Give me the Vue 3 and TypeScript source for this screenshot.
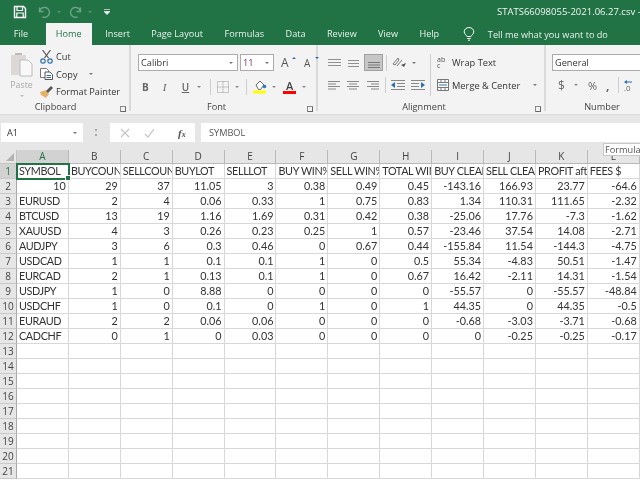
<script setup lang="ts">
const tabs: string[] = ['File', 'Home', 'Insert', 'Page Layout', 'Formulas', 'Data', 'Review', 'View', 'Help']
const cols: string[] = 'ABCDEFGHIJKL'.split('')
const head: string[] = ['SYMBOL', 'BUYCOUNT', 'SELLCOUNT', 'BUYLOT', 'SELLLOT', 'BUY WIN%', 'SELL WIN%', 'TOTAL WIN%', 'BUY CLEAN', 'SELL CLEAN', 'PROFIT after', 'FEES $']
const data: string[][] = [
  ['10', '29', '37', '11.05', '3', '0.38', '0.49', '0.45', '-143.16', '166.93', '23.77', '-64.6'],
  ['EURUSD', '2', '4', '0.06', '0.33', '1', '0.75', '0.83', '1.34', '110.31', '111.65', '-2.32'],
  ['BTCUSD', '13', '19', '1.16', '1.69', '0.31', '0.42', '0.38', '-25.06', '17.76', '-7.3', '-1.62'],
  ['XAUUSD', '4', '3', '0.26', '0.23', '0.25', '1', '0.57', '-23.46', '37.54', '14.08', '-2.71'],
  ['AUDJPY', '3', '6', '0.3', '0.46', '0', '0.67', '0.44', '-155.84', '11.54', '-144.3', '-4.75'],
  ['USDCAD', '1', '1', '0.1', '0.1', '1', '0', '0.5', '55.34', '-4.83', '50.51', '-1.47'],
  ['EURCAD', '2', '1', '0.13', '0.1', '1', '0', '0.67', '16.42', '-2.11', '14.31', '-1.54'],
  ['USDJPY', '1', '0', '8.88', '0', '0', '0', '0', '-55.57', '0', '-55.57', '-48.84'],
  ['USDCHF', '1', '0', '0.1', '0', '1', '0', '1', '44.35', '0', '44.35', '-0.5'],
  ['EURAUD', '2', '2', '0.06', '0.06', '0', '0', '0', '-0.68', '-3.03', '-3.71', '-0.68'],
  ['CADCHF', '0', '1', '0', '0.03', '0', '0', '0', '0', '-0.25', '-0.25', '-0.17']
]
const rows: number[] = Array.from({ length: 21 }, (_, i) => i + 1)
function isText(v: string): boolean {
  return /^[A-Z]/.test(v)
}
function cell(r: number, c: number): string {
  if (r === 1) return head[c]
  const row = data[r - 2]
  return row ? row[c] : ''
}
</script>

<template>
  <div class="app">
    <header class="green">
      <div class="title">
        <svg class="save" width="14" height="14" viewBox="0 0 14 14">
          <path d="M1.500 1.500h9l2 2v9h-11z" fill="none" stroke="#fff" stroke-width="1.400" />
          <path d="M4 2v3.500h5.500V2M3.800 12.500V8h6.400v4.500" fill="none" stroke="#fff" stroke-width="1.200" />
        </svg>
        <svg class="undo" width="13" height="12" viewBox="0 0 13 12">
          <path d="M1.500 5.500a5 5 0 1 1 3 5.500M1.500 1.500v4h4" fill="none" stroke="#6fa287" stroke-width="1.400" />
        </svg>
        <i class="tiny dim"></i>
        <svg class="redo" width="13" height="12" viewBox="0 0 13 12">
          <path d="M11.500 5.500a5 5 0 1 0-3 5.500M11.500 1.500v4h-4" fill="none" stroke="#6fa287" stroke-width="1.400" />
        </svg>
        <i class="tiny dim"></i>
        <svg class="custom" width="6" height="6" viewBox="0 0 6 6">
          <path d="M0 .5h6M0 2.500h6L3 5.500z" fill="#fff" stroke="#fff" stroke-width=".6" />
        </svg>
        <span class="filename">STATS66098055-2021.06.27.csv - Excel</span>
      </div>
      <nav class="tabs">
        <span v-for="t in tabs" :key="t" class="tab" :class="{ active: t === 'Home' }">{{ t }}</span>
        <svg class="bulb" width="12" height="14" viewBox="0 0 12 14">
          <path d="M4 9.500C3.500 8 1.200 7 1.200 4.800a4.800 4.300 0 0 1 9.600 0C10.800 7 8.500 8 8 9.500zM4.300 11.500h3.400M5 13.200h2" fill="none" stroke="#fff" stroke-width="1" />
        </svg>
        <span class="tell">Tell me what you want to do</span>
      </nav>
    </header>

    <section class="ribbon">
      <div class="group g-clip">
        <div class="clip-body">
          <div class="paste">
            <svg width="24" height="25" viewBox="0 0 24 25">
              <path d="M1 3h15v20H1z" fill="#dcd8d8" />
              <path d="M5 3h7V1H5z" fill="#bdb8b8" />
              <path d="M10 8h8l4 4v12H10z" fill="#f8f8f8" stroke="#bcbcbc" />
            </svg>
            <span>Paste</span>
            <i class="tiny pale"></i>
          </div>
          <div class="clip-items">
            <div class="clip-item">
              <svg width="13" height="14" viewBox="0 0 13 14">
                <path d="M2.500 0l6 8M10.500 0l-6 8" stroke="#555" stroke-width="1.200" />
                <circle cx="3" cy="11" r="2.200" fill="none" stroke="#2b6fb0" stroke-width="1.200" />
                <circle cx="10" cy="11" r="2.200" fill="none" stroke="#2b6fb0" stroke-width="1.200" />
              </svg>
              <span>Cut</span>
            </div>
            <div class="clip-item">
              <svg width="13" height="12" viewBox="0 0 13 12">
                <path d="M.5.500h6l2 2v7h-8z" fill="#fff" stroke="#777" />
                <path d="M5 4h5l2.500 2.500v5H5z" fill="#fff" stroke="#555" />
                <path d="M6.500 7.500h4.500M6.500 9.500h4.500" stroke="#2b6fb0" />
              </svg>
              <span>Copy</span>
              <i class="tiny copy-arrow"></i>
            </div>
            <div class="clip-item">
              <svg width="13" height="12" viewBox="0 0 13 12">
                <path d="M0 6l6-2 3 4-3 4-5-3z" fill="#e6b268" />
                <path d="M6 5l5-5 2 2-5 5z" fill="#555" />
              </svg>
              <span>Format Painter</span>
            </div>
          </div>
        </div>
        <div class="glabel"><span>Clipboard</span></div>
        <i class="launcher"></i>
      </div>

      <div class="group g-font">
        <div class="font-row1">
          <div class="combo font-name"><span>Calibri</span><i class="tiny"></i></div>
          <div class="combo font-size"><span>11</span><i class="tiny"></i></div>
          <span class="grow">A<small class="up"></small></span>
          <span class="grow shrink">A<small class="down"></small></span>
        </div>
        <div class="font-row2">
          <b class="f-b">B</b>
          <em class="f-i">I</em>
          <u class="f-u">U</u>
          <i class="tiny t1"></i>
          <i class="vsep v1"></i>
          <svg width="12" height="12" viewBox="0 0 12 12">
            <path d="M.5.500h11v11H.5zM6 .5v11M.5 6h11" fill="none" stroke="#999" stroke-dasharray="1 1" />
          </svg>
          <i class="tiny t2"></i>
          <i class="vsep v2"></i>
          <svg width="14" height="14" viewBox="0 0 14 14">
            <path d="M3 5l4-4 4 4-3.500 4.500h-2z" fill="#fff" stroke="#666" />
            <circle cx="11.500" cy="6.500" r="1.800" fill="#2b79c2" />
            <rect x="0" y="10.500" width="13" height="3" fill="#ffff00" />
          </svg>
          <i class="tiny t3"></i>
          <span class="colour-a">A<i></i></span>
          <i class="tiny t4"></i>
        </div>
        <div class="glabel"><span>Font</span></div>
        <i class="launcher"></i>
      </div>

      <div class="group g-align">
        <div class="align-left">
          <div class="a-row">
            <svg width="13" height="8" viewBox="0 0 13 8"><path d="M0 .5h13M0 3.500h13M0 6.500h13" stroke="#909090" /></svg>
            <svg class="mid" width="13" height="8" viewBox="0 0 13 8"><path d="M1 .5h11M1 3.500h11M1 6.500h11" stroke="#909090" /></svg>
            <span class="sel-align">
              <svg width="12" height="6" viewBox="0 0 12 6"><path d="M0 .5h12M0 3h12M0 5.500h12" stroke="#777" /></svg>
            </span>
            <i class="vsep short"></i>
            <svg width="14" height="12" viewBox="0 0 14 12">
              <path d="M1 7l5-6 1 2-4 5zM5 9l5-6" fill="none" stroke="#777" />
              <path d="M9 8l5-2-2 4z" fill="#555" />
            </svg>
            <i class="tiny ori"></i>
          </div>
          <div class="a-row r2">
            <svg width="12" height="9" viewBox="0 0 12 9"><path d="M0 .5h12M0 3h8M0 5.500h12M0 8h8" stroke="#888" /></svg>
            <svg class="mid2" width="12" height="9" viewBox="0 0 12 9"><path d="M0 .5h12M2 3h8M0 5.500h12M2 8h8" stroke="#888" /></svg>
            <svg class="mid3" width="12" height="9" viewBox="0 0 12 9"><path d="M0 .5h12M4 3h8M0 5.500h12M4 8h8" stroke="#888" /></svg>
            <i class="vsep short s2"></i>
            <svg width="14" height="10" viewBox="0 0 14 10"><path d="M0 .5h14M6 3.500h8M6 6.500h8M0 9.500h14" stroke="#888" /><path d="M0 5l4-3v6z" fill="#2b6fb0" /></svg>
            <svg class="ind2" width="14" height="10" viewBox="0 0 14 10"><path d="M0 .5h14M0 3.500h8M0 6.500h8M0 9.500h14" stroke="#888" /><path d="M14 5l-4-3v6z" fill="#2b6fb0" /></svg>
          </div>
        </div>
        <i class="vsep tall"></i>
        <div class="align-right">
          <div class="a-cmd">
            <span class="wrap-icon"><span>ab</span><span>c</span></span>
            <span>Wrap Text</span>
          </div>
          <div class="a-cmd cmd2">
            <svg width="12" height="12" viewBox="0 0 12 12">
              <path d="M.5.500h11v11H.5zM.5 3.500h11M.5 8.500h11M4 .5v3M8 .5v3M4 8.500v3M8 8.500v3" fill="#fff" stroke="#777" />
              <path d="M2 6h8" stroke="#2b6fb0" />
            </svg>
            <span>Merge &amp; Center</span>
            <i class="tiny merge-arrow"></i>
          </div>
        </div>
        <div class="glabel"><span>Alignment</span></div>
        <i class="launcher"></i>
      </div>

      <div class="group g-num">
        <div class="combo num-fmt"><span>General</span></div>
        <div class="num-row">
          <span class="n-d">$</span>
          <i class="tiny"></i>
          <span class="n-p">%</span>
          <span class="n-c">,</span>
          <i class="vsep short n-s"></i>
          <svg width="12" height="12" viewBox="0 0 12 12">
            <path d="M0 3l3-2v4z" fill="#2b6fb0" />
            <path d="M3 3h5" stroke="#2b6fb0" />
            <text x="0" y="12" font-size="8" fill="#666">.0</text>
          </svg>
        </div>
        <div class="glabel"><span>Number</span></div>
      </div>
    </section>

    <div class="formula-bar">
      <div class="namebox"><span>A1</span><i class="tiny"></i></div>
      <span class="dots"></span>
      <div class="fx-box">
        <svg width="10" height="10" viewBox="0 0 10 10"><path d="M1 1l8 8M9 1l-8 8" stroke="#c4c4c4" stroke-width="1.200" /></svg>
        <svg width="11" height="10" viewBox="0 0 11 10"><path d="M1 6l3 3 6-8" fill="none" stroke="#c4c4c4" stroke-width="1.200" /></svg>
        <span class="fx">f<small>x</small></span>
      </div>
      <div class="formula"><span>SYMBOL</span></div>
    </div>

    <main class="sheet">
      <div class="corner"><i></i></div>
      <div v-for="c in cols" :key="c" class="ch" :class="{ on: c === 'A' }">{{ c }}</div>
      <template v-for="r in rows" :key="r">
        <div class="rh" :class="{ on: r === 1 }">{{ r }}</div>
        <div
          v-for="(c, ci) in cols"
          :key="c"
          class="cell"
          :class="{ left: r === 1 || isText(cell(r, ci)), active: r === 1 && ci === 0 }"
        >
          <span>{{ cell(r, ci) }}</span>
          <i v-if="r === 1 && ci === 0" class="handle"></i>
        </div>
      </template>
      <div class="tip">Formula</div>
    </main>
  </div>
</template>

<style>
html, body { margin: 0; overflow: hidden; }
</style>

<style scoped>
.app { width: 640px; height: 480px; overflow: hidden; position: relative; display: flex; flex-direction: column; background: #fff; font-family: "Open Sans", "Noto Sans", sans-serif; color: #333; font-size: 9.2px; filter: blur(0.35px); }
i { display: block; font-style: normal; }
.green { background: #217346; color: #fff; height: 45px; flex: none; }
.title { height: 23px; display: flex; align-items: center; overflow: hidden; }
.save { margin-left: 13px; flex: none; }
.undo { margin-left: 11px; flex: none; }
.tiny { width: 0; height: 0; flex: none; border-left: 2.5px solid transparent; border-right: 2.5px solid transparent; border-top: 2.5px solid #777; }
.tiny.dim { border-top-color: #5c9579; margin-left: 6px; }
.redo { margin-left: 8px; flex: none; }
.custom { margin-left: 12px; flex: none; }
.filename { margin-left: 387px; flex: none; font-size: 9.5px; color: #f0f5f2; white-space: nowrap; }
.tabs { height: 22px; display: flex; align-items: center; }
.tab { padding: 0 10.7px; line-height: 22px; white-space: nowrap; font-size: 9.15px; color: #e9f2ed; }
.tab:first-child { margin-left: 3px; }
.tab.active { background: #f3f3f3; color: #217346; margin: 0 3px 0 7px; padding: 0 10px; }
.bulb { margin-left: 13px; flex: none; }
.tell { margin-left: 13px; white-space: nowrap; font-size: 9.15px; color: #e9f2ed; }

.ribbon { height: 70px; flex: none; background: #f3f3f3; display: flex; border-bottom: 1px solid #dcdcdc; box-sizing: border-box; }
.group { position: relative; box-sizing: border-box; border-right: 2px solid #dadada; margin-bottom: 3px; flex: none; }
.g-clip { width: 131px; }
.g-font { width: 187px; padding: 9px 0 0 7px; }
.g-align { width: 228px; padding: 9px 0 0 10px; display: flex; }
.g-num { flex: 1; padding: 9px 0 0 6px; border-right: 0; overflow: visible; min-width: 0; }
.glabel { position: absolute; left: 0; right: 0; bottom: -2px; text-align: center; line-height: 12px; font-size: 9.2px; color: #444; }
.g-clip .glabel { right: 18px; }
.g-font .glabel { right: 14px; }
.g-align .glabel { right: 14px; }
.g-num .glabel { left: 18px; right: 0; }
.launcher { position: absolute; right: 3px; bottom: -1px; width: 6px; height: 6px; border: 1px solid #888; box-sizing: border-box; border-width: 1px 0 0 1px; }
.launcher::after { content: ""; display: block; width: 4px; height: 4px; border-right: 1px solid #666; border-bottom: 1px solid #666; }

.clip-body { display: flex; padding: 7px 0 0 9px; }
.paste { width: 25px; display: flex; flex-direction: column; align-items: center; color: #a8a8a8; line-height: 12px; font-size: 8.8px; }
.paste svg { margin-bottom: 2px; }
.tiny.pale { border-top-color: #bbb; margin-top: 4px; }
.clip-items { margin: -4px 0 0 6px; display: flex; flex-direction: column; }
.clip-item { height: 17.5px; display: flex; align-items: center; gap: 3px; white-space: nowrap; }
.clip-item svg { width: 13px; flex: none; }
.copy-arrow { margin-left: 8px; }

.font-row1, .font-row2 { display: flex; align-items: center; }
.combo { box-sizing: border-box; height: 17px; background: #fff; border: 1px solid #ababab; display: flex; align-items: center; justify-content: space-between; padding: 0 4px 0 2px; font-size: 9.2px; color: #333; }
.font-name { width: 100px; }
.font-size { width: 34px; margin-left: 2px; color: #7b2d5c; }
.grow { margin-left: 7px; width: 12px; font-size: 12px; position: relative; color: #555; line-height: 14px; }
.grow.shrink { margin-left: 11px; font-size: 10px; }
.up, .down { position: absolute; right: -3px; top: 1px; width: 0; height: 0; border-left: 2.5px solid transparent; border-right: 2.5px solid transparent; }
.up { border-bottom: 2.5px solid #2b6fb0; }
.down { border-top: 2.5px solid #2b6fb0; }
.font-row2 { margin-top: 8px; height: 16px; padding-left: 4px; font-size: 10px; color: #666; }
.f-i { margin-left: 14px; font-family: "Liberation Serif", serif; font-size: 11px; width: 6px; }
.f-u { margin-left: 13px; font-weight: 600; }
.font-row2 .tiny { border-top-color: #888; }
.vsep { width: 1px; height: 16px; background: #cfcfcf; flex: none; }
.t1 { margin-left: 8px; }
.v1 { margin: 0 6px 0 9px; }
.t2 { margin-left: 6px; }
.v2 { margin: 0 6px 0 7px; }
.t3 { margin-left: 5px; }
.colour-a { margin-left: 7px; width: 13px; text-align: center; color: #444; font-weight: 600; font-size: 11px; line-height: 11px; }
.colour-a i { height: 3px; background: #f00; }
.t4 { margin-left: 6px; }

.align-left { width: 101px; flex: none; }
.a-row { display: flex; align-items: center; height: 17px; }
.a-row.r2 { margin-top: 6px; height: 16px; }
.mid { margin-left: 6px; margin-top: 2px; }
.mid2 { margin-left: 7px; }
.mid3 { margin-left: 8px; }
.sel-align { margin-left: 4px; box-sizing: border-box; width: 19px; height: 17px; background: #c6c6c6; border: 1px solid #a0a0a0; display: flex; align-items: flex-end; justify-content: center; padding-bottom: 2px; }
.a-row .vsep.short { margin: 0 5px 0 3px; }
.a-row .vsep.s2 { margin: 0 5px 0 6px; }
.ori { margin-left: 6px; }
.ind2 { margin-left: 6px; }
.vsep.tall { height: 42px; margin: 0 6px 0 1px; }
.align-right { flex: 1; }
.a-cmd { height: 17px; display: flex; align-items: center; gap: 3px; white-space: nowrap; font-size: 9.3px; }
.a-cmd.cmd2 { margin-top: 6px; height: 16px; }
.wrap-icon { width: 12px; display: flex; flex-direction: column; font-size: 7px; line-height: 6px; color: #555; }
.merge-arrow { margin-left: 10px; }

.num-fmt { width: 120px; }
.num-row { margin-top: 6px; height: 16px; display: flex; align-items: center; padding-left: 6px; color: #666; font-size: 12px; }
.n-d { width: 7px; }
.num-row .tiny { margin-left: 9px; border-top-color: #888; }
.n-p { margin-left: 10px; width: 12px; font-size: 11px; }
.n-c { margin-left: 6px; font-weight: 700; }
.vsep.n-s { margin: 0 5px 0 9px; }

.formula-bar { height: 35px; flex: none; background: #e6e6e6; display: flex; padding: 8px 0 8px 1px; box-sizing: border-box; align-items: stretch; }
.namebox { width: 82px; background: #fff; display: flex; align-items: center; justify-content: space-between; padding: 0 6px; box-sizing: border-box; font-size: 9.2px; color: #333; height: 19px; }
.dots { width: 2px; height: 7px; margin: 6px 11px 0 12px; border-left: 2px dotted #aaa; }
.fx-box { width: 85px; background: #fff; height: 19px; display: flex; align-items: center; gap: 14px; padding-left: 10px; box-sizing: border-box; }
.fx { font-family: "Liberation Serif", serif; font-style: italic; color: #555; font-size: 11px; font-weight: 700; margin-left: 9px; }
.fx small { font-size: 8px; }
.formula { flex: 1; background: #fff; margin-left: 6px; height: 19px; display: flex; align-items: center; padding-left: 8px; font-size: 9.2px; color: #555; }

.sheet { flex: 1; position: relative; display: grid; grid-template-columns: 17px repeat(12, 51.9px); grid-template-rows: 14px repeat(21, 15px); align-content: start; background: #fff; font-family: Lato, "Open Sans", sans-serif; font-size: 10.8px; color: #333; }
.corner { background: #e6e6e6; border-right: 1px solid #c4c4c4; border-bottom: 1px solid #c4c4c4; box-sizing: border-box; position: relative; overflow: hidden; }
.corner i { position: absolute; right: 2px; bottom: 2px; width: 0; height: 0; border-left: 8px solid transparent; border-bottom: 8px solid #b4b4b4; }
.ch { background: #e6e6e6; text-align: center; line-height: 13px; border-right: 1px solid #b9b9b9; border-bottom: 1px solid #b9b9b9; box-sizing: border-box; font-size: 10px; font-family: "Open Sans", sans-serif; color: #444; }
.ch.on { background: #d2d2d2; color: #217346; border-bottom: 1px solid #217346; }
.rh { background: #e6e6e6; text-align: center; line-height: 14px; border-right: 1px solid #a8a8a8; border-bottom: 1px solid #c8c8c8; box-sizing: border-box; font-size: 10px; font-family: "Open Sans", sans-serif; color: #444; }
.rh.on { background: #d2d2d2; color: #217346; border-right: 1px solid #217346; }
.cell { box-sizing: border-box; border-right: 1px solid #d8d8d8; border-bottom: 1px solid #d8d8d8; display: flex; justify-content: flex-end; align-items: center; padding: 0 2px; white-space: nowrap; overflow: hidden; line-height: 14px; position: relative; }
.cell.left { justify-content: flex-start; letter-spacing: -0.35px; }
.cell.active { overflow: visible; outline: 2px solid #217346; outline-offset: -1px; z-index: 2; }
.handle { position: absolute; right: -3px; bottom: -3px; width: 4px; height: 4px; background: #217346; border: 1px solid #fff; }
.tip { position: absolute; left: 603px; top: -7px; width: 60px; height: 13px; background: #fff; border: 1px solid #c8c8c8; box-sizing: border-box; font-family: "Open Sans", sans-serif; font-size: 9.2px; line-height: 11px; padding-left: 1px; color: #555; white-space: nowrap; z-index: 3; }
</style>
